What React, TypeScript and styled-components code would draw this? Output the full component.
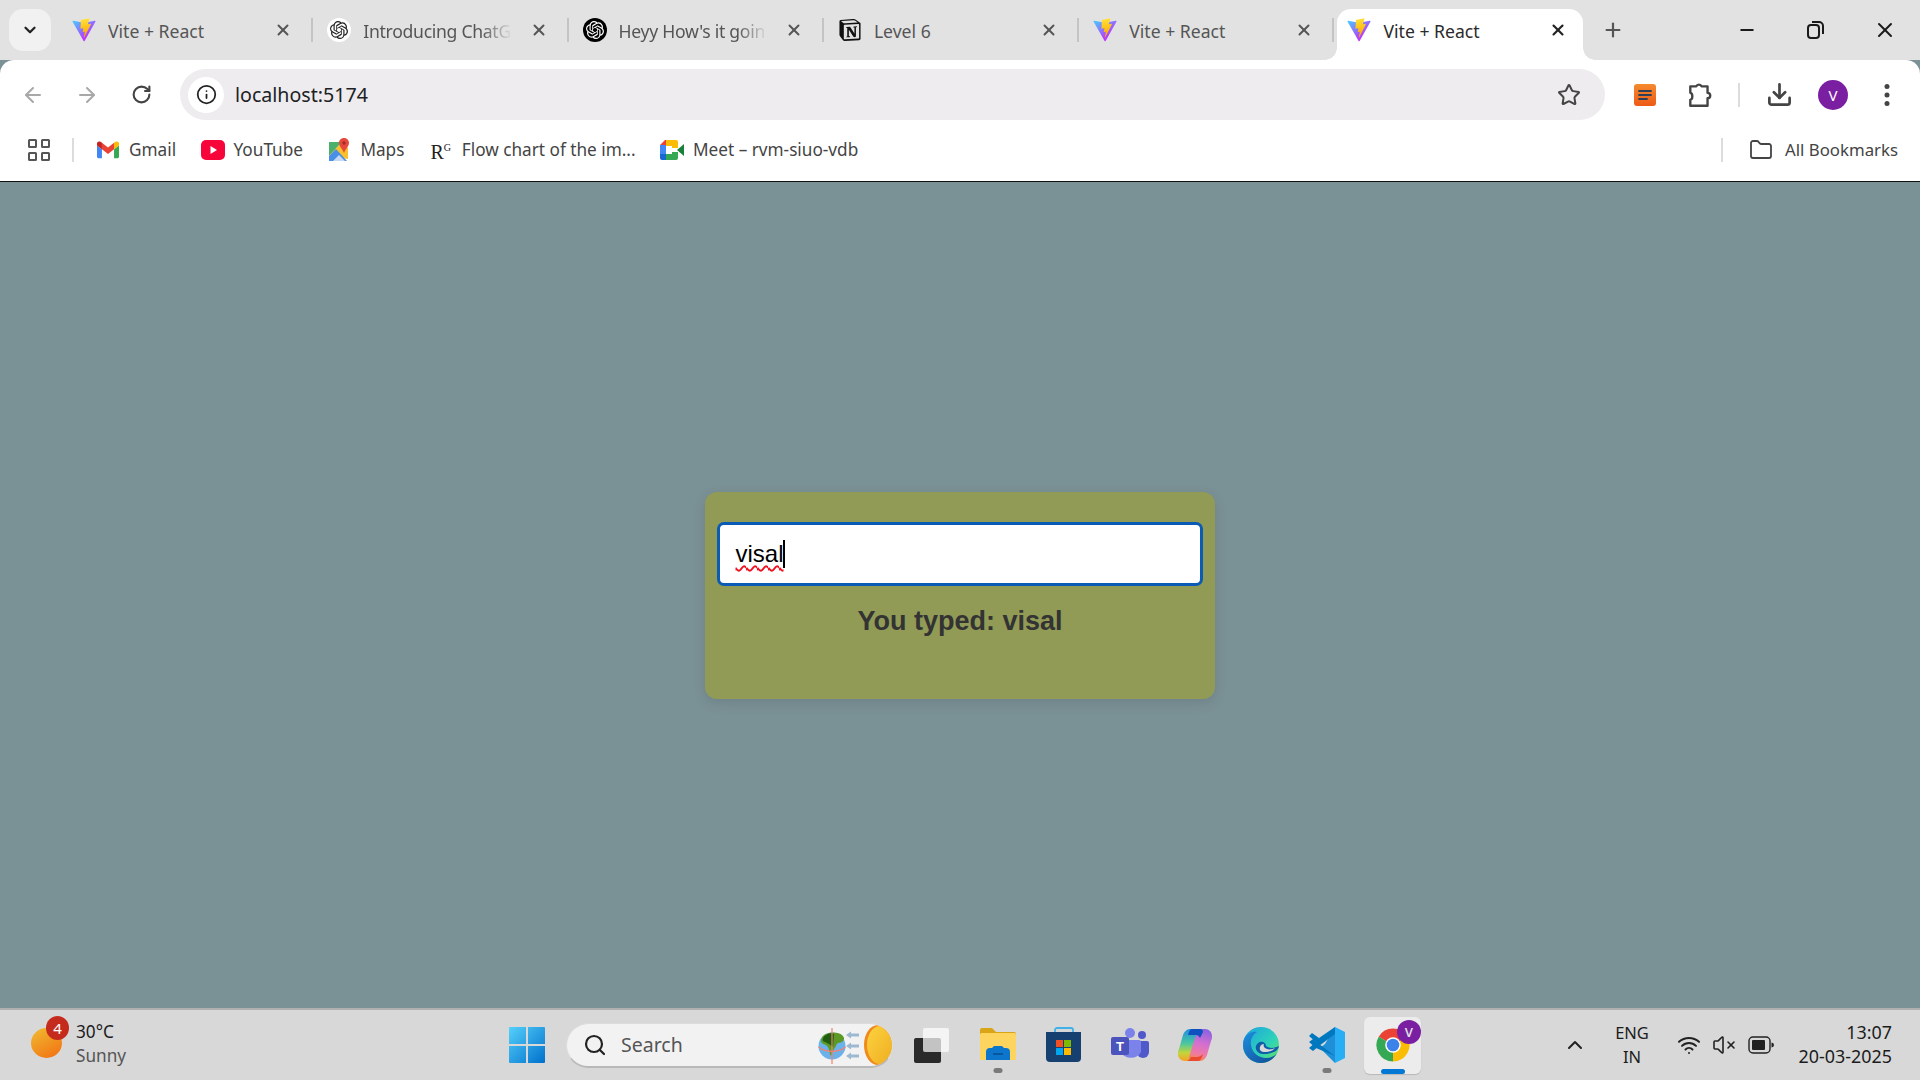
import React, { useId } from "react";
import styled, { createGlobalStyle } from "styled-components";
import { ArrowLeft, ArrowRight, RotateCw, Info, Star, Download, X, Plus, Minus, ChevronDown, ChevronUp, Folder, Search, Wifi, VolumeX } from "lucide-react";
import { SiOpenai, SiNotion } from "react-icons/si";

const Global = createGlobalStyle`
  html, body { margin: 0; padding: 0; height: 100%; overflow: hidden; }
  #root { height: 100vh; }
  * { box-sizing: border-box; }
`;

const UI = `"Noto Sans", "Open Sans", sans-serif`;

const Screen = styled.div`
  display: flex; flex-direction: column; height: 100vh; width: 1920px;
  font-family: ${UI}; background: #7a9196;
`;
const TabStrip = styled.div`
  display: flex; height: 60px; flex: none; background: #e2e2e2; padding-left: 9px; align-items: flex-end;
`;
const TabMenu = styled.div`
  width: 42px; height: 42px; border-radius: 14px; background: #f1f1f1; display: flex; align-items: center; justify-content: center;
  align-self: flex-start; margin-top: 9px; margin-right: 7px; color: #222;
`;
const Tab = styled.div<{ $active?: boolean }>`
  position: relative; width: ${p => (p.$active ? 246 : 254.3)}px; height: 51px; flex: none; display: flex; align-items: center;
  padding: 0 ${p => (p.$active ? 16 : 20)}px 9px ${p => (p.$active ? 10 : 14)}px;
  margin-left: ${p => (p.$active ? 3 : 0)}px; margin-right: ${p => (p.$active ? 5 : 0)}px;
  color: ${p => (p.$active ? "#2b2b2b" : "#555")};
  background: ${p => (p.$active ? "#fff" : "transparent")};
  border-radius: 14px 14px 0 0;
  ${p => p.$active && `
    &::before, &::after { content: ""; position: absolute; bottom: 0; width: 12px; height: 12px; }
    &::before { left: -12px; background: radial-gradient(circle at 0 0, transparent 11.5px, #fff 12px); }
    &::after { right: -12px; background: radial-gradient(circle at 100% 0, transparent 11.5px, #fff 12px); }
  `}
`;
const TabIcon = styled.div`
  width: 24px; height: 24px; flex: none; display: flex; align-items: center; justify-content: center;
`;
const LogoDisc = styled.div<{ $dark?: boolean }>`
  width: 24px; height: 24px; border-radius: 50%; display: flex; align-items: center; justify-content: center;
  background: ${p => (p.$dark ? "#000" : "#fff")}; color: ${p => (p.$dark ? "#fff" : "#222")};
`;
const TabTitle = styled.div<{ $fade?: boolean }>`
  margin-left: 12px; margin-top: 2px; width: 152px; font-size: 17.6px; white-space: nowrap; overflow: hidden;
  ${p => p.$fade && `letter-spacing: -0.3px; mask-image: linear-gradient(to right, #000 78%, transparent 98%);`}
`;
const TabClose = styled.div`
  margin-left: auto; display: flex; align-items: center;
`;
const TabSep = styled.div`
  width: 2px; height: 24px; background: #c4c4c4; align-self: flex-start; margin-top: 18px; margin-left: -1px; margin-right: 0;
`;
const NewTab = styled.div`
  width: 50px; height: 60px; align-self: flex-start; display: flex; align-items: center; justify-content: center; color: #555;
`;
const WindowControls = styled.div`
  margin-left: auto; display: flex; align-self: flex-start; height: 60px; align-items: center;
`;
const WindowButton = styled.div`
  width: 69.33px; display: flex; align-items: center; justify-content: center; color: #1a1a1a;
`;
const Toolbar = styled.div`
  height: 69px; flex: none; background: #fff; border-radius: 14px 14px 0 0; display: flex; align-items: center; padding-left: 7px; gap: 2px;
`;
const NavButton = styled.div<{ $dim?: boolean }>`
  width: 52px; height: 40px; display: flex; align-items: center; justify-content: center; color: ${p => (p.$dim ? "#a8a8a8" : "#444")};
`;
const Address = styled.div`
  flex: 1; height: 51px; margin-left: 11px; background: #eeecee; border-radius: 26px; display: flex; align-items: center; padding: 0 24px 0 8px;
`;
const InfoChip = styled.div`
  width: 36px; height: 36px; border-radius: 50%; background: #fff; display: flex; align-items: center; justify-content: center; color: #222;
`;
const Url = styled.div`
  margin-left: 11px; font-size: 19.6px; color: #202124;
`;
const StarWrap = styled.div`
  margin-left: auto; display: flex; color: #444;
`;
const ToolCluster = styled.div`
  display: flex; align-items: center; width: 313px; flex: none; padding-right: 15px; color: #444;
`;
const ToolSlot = styled.div<{ $w: number }>`
  width: ${p => p.$w}px; display: flex; align-items: center; justify-content: center;
`;
const VSep = styled.div<{ $h?: number; $color?: string }>`
  width: 2px; height: ${p => p.$h ?? 24}px; background: ${p => p.$color ?? "#dcdcdc"}; flex: none;
`;
const Avatar = styled.div`
  width: 30px; height: 30px; border-radius: 50%; background: #7b1fa2; color: #fff; display: flex; align-items: center; justify-content: center; font-size: 15px;
`;
const BookmarkBar = styled.div`
  height: 53px; flex: none; background: #fff; border-bottom: 1px solid #111; padding: 0 22px 10px 28px; display: flex; align-items: center;
`;
const AppsGrid = styled.div`
  width: 22px; height: 22px; display: grid; grid-template-columns: 1fr 1fr; gap: 4px; margin-right: 22px;
`;
const AppsCell = styled.div`
  border: 2px solid #555; border-radius: 1.5px;
`;
const Bookmark = styled.div`
  display: flex; align-items: center; gap: 9px; margin-left: 24.4px; font-size: 17.2px; color: #444; white-space: nowrap;
`;
const FirstBookmark = styled(Bookmark)`
  margin-left: 22px;
`;
const BookmarkLabel = styled.span`
  margin-top: -2px;
`;
const BookmarkIcon = styled.div`
  width: 24px; height: 24px; display: flex; align-items: center; justify-content: center; flex: none;
`;
const RsLogo = styled.div`
  font-family: "Liberation Serif", serif; font-size: 20px; color: #222; line-height: 1; margin-top: 3px;
  sup { font-size: 10px; vertical-align: 8px; line-height: 0; }
`;
const BookmarkEnd = styled.div`
  margin-left: auto; display: flex; align-items: center;
`;
const AllBookmarks = styled(Bookmark)`
  margin-left: 26px; gap: 12px; font-size: 16.8px;
`;
const Page = styled.main`
  flex: 1; display: flex; align-items: center; justify-content: center; background: #7a9196;
`;
const Card = styled.div`
  width: 510px; height: 207px; margin-top: 1px; background: #919b56; border-radius: 12px; padding: 30px 12px 0 12px;
  box-shadow: 0 4px 14px rgba(0, 0, 0, 0.1); display: flex; flex-direction: column; font-family: "Liberation Sans", Arial, sans-serif;
`;
const Field = styled.div`
  height: 64px; background: #fff; border: 3px solid #0a5bb5; border-radius: 7px; display: flex; align-items: center; padding-left: 15.5px; font-size: 24px; color: #000;
`;
const Misspelt = styled.span`
  text-decoration: underline wavy #f01020 1.6px; text-underline-offset: 3px;
`;
const Caret = styled.span`
  width: 2px; height: 28px; background: #000; margin-left: -1px;
`;
const Echo = styled.div`
  margin-top: 20px; text-align: center; font-size: 27px; font-weight: 700; color: #333;
`;
const Taskbar = styled.footer`
  height: 72px; flex: none; background: #d8d8d8; border-top: 2px solid #b0b0b0; display: flex; align-items: center;
`;
const Weather = styled.div`
  width: 500px; flex: none; display: flex; align-items: center; padding-left: 31px;
`;
const Sun = styled.div`
  position: relative; width: 31px; height: 30px; border-radius: 50%; background: linear-gradient(150deg, #f0bd32, #f26d10); margin-top: -4px;
`;
const SunBadge = styled.div`
  position: absolute; left: 15px; top: -12px; width: 23px; height: 24px; border-radius: 50%; background: #c42b1c; color: #fff; font-size: 15px;
  display: flex; align-items: center; justify-content: center;
`;
const Lines = styled.div<{ $align?: string }>`
  display: flex; flex-direction: column; font-size: 16.5px; line-height: 24px; color: #1c1c1c; text-align: ${p => p.$align ?? "left"};
`;
const WeatherText = styled(Lines)`
  margin-left: 14px; margin-top: -2px; font-size: 17.2px;
`;
const Muted = styled.span`
  color: #555;
`;
const TaskSlot = styled.div<{ $w?: number }>`
  position: relative; flex: none; width: ${p => p.$w ?? 65.85}px; height: 57px; display: flex; align-items: center; justify-content: center;
`;
const ActiveTile = styled.div`
  width: 57px; height: 57px; border-radius: 6px; background: #ececec; box-shadow: 0 1px 1px rgba(0,0,0,.15); display: flex; align-items: center; justify-content: center;
`;
const RunDot = styled.div`
  position: absolute; bottom: 1px; left: 50%; transform: translateX(-50%); width: 9px; height: 5px; border-radius: 3px; background: #7a7a7a;
`;
const ActiveBar = styled.div`
  position: absolute; bottom: 0; left: 50%; transform: translateX(-50%); width: 24px; height: 5px; border-radius: 3px; background: #0078d4;
`;
const ChromeBadge = styled.div`
  position: absolute; top: 3px; right: 5px; width: 24px; height: 24px; border-radius: 50%; background: #7b1fa2; color: #ddd; font-size: 13px; font-weight: 600;
  display: flex; align-items: center; justify-content: center;
`;
const SearchPill = styled.div`
  width: 327px; height: 45px; flex: none; margin: 0 4px 0 12px; border-radius: 23px; background: #f2f2f2; border: 1px solid #dcdcdc; border-bottom: 2px solid #b9b9b9;
  display: flex; align-items: center; padding-left: 16px; overflow: hidden; color: #222;
`;
const SearchText = styled.div`
  margin-left: 14px; font-size: 19.5px; color: #555;
`;
const SearchArt = styled.div`
  margin-left: auto; display: flex;
`;
const Tray = styled.div`
  margin-left: auto; width: 360px; flex: none; display: flex; align-items: center; padding-right: 28px; color: #222;
`;
const TraySlot = styled.div<{ $w: number }>`
  width: ${p => p.$w}px; flex: none; display: flex; align-items: center; justify-content: center;
`;
const Clock = styled(Lines)`
  margin-left: auto; margin-top: -2px; font-size: 17.9px;
`;

const Vite = ({ size = 26 }: { size?: number }) => {
  const id = useId();
  return (
    <svg width={size} height={size} viewBox="0 0 410 404">
      <defs>
        <linearGradient id={id + "a"} x1="6" y1="33" x2="235" y2="344" gradientUnits="userSpaceOnUse">
          <stop stopColor="#41D1FF" /><stop offset="1" stopColor="#BD34FE" />
        </linearGradient>
        <linearGradient id={id + "b"} x1="194" y1="8" x2="236" y2="293" gradientUnits="userSpaceOnUse">
          <stop stopColor="#FFEA83" /><stop offset=".08" stopColor="#FFDD35" /><stop offset="1" stopColor="#FFA800" />
        </linearGradient>
      </defs>
      <path fill={`url(#${id}a)`} d="M399.641 59.5246L215.643 388.545C211.844 395.338 202.084 395.378 198.228 388.618L10.5817 59.5563C6.38087 52.1896 12.6802 43.2665 21.0281 44.7586L205.223 77.6824C206.398 77.8924 207.601 77.8904 208.776 77.6763L389.119 44.8058C397.439 43.2894 403.768 52.1434 399.641 59.5246Z" />
      <path fill={`url(#${id}b)`} d="M292.965 1.5744L156.801 28.2552C154.563 28.6937 152.906 30.5903 152.771 32.8664L144.395 174.33C144.198 177.662 147.258 180.248 150.51 179.498L188.42 170.749C191.967 169.931 195.172 173.055 194.443 176.622L183.18 231.775C182.422 235.487 185.907 238.661 189.532 237.56L212.947 230.446C216.577 229.344 220.065 232.527 219.297 236.242L201.398 322.875C200.278 328.294 207.486 331.249 210.492 326.603L212.5 323.5L323.454 102.072C325.312 98.3645 322.108 94.137 318.036 94.9228L279.014 102.454C275.347 103.161 272.227 99.746 273.262 96.1583L298.731 7.86689C299.767 4.27314 296.636 0.855181 292.965 1.5744Z" />
    </svg>
  );
};

const Gmail = () => (
  <svg width="22" height="22" viewBox="0 0 24 24">
    <path fill="#4285f4" d="M1.6 21h3.8V11.3L0 7.2v12.2C0 20.3.7 21 1.6 21z" />
    <path fill="#34a853" d="M18.6 21h3.8c.9 0 1.6-.7 1.6-1.6V7.2l-5.4 4.1z" />
    <path fill="#fbbc04" d="M18.6 4.2v7.1L24 7.2V5c0-2-2.3-3.1-3.9-1.9z" />
    <path fill="#ea4335" d="M5.4 11.3V4.2L12 9.2l6.6-5v7.1L12 16.3z" />
    <path fill="#c5221f" d="M0 5v2.2l5.4 4.1V4.2L3.9 3.1C2.3 1.9 0 3 0 5z" />
  </svg>
);
const YouTube = () => (
  <svg width="24" height="20" viewBox="0 0 24 20">
    <rect width="24" height="20" rx="5" fill="#f6043a" />
    <path d="M9.5 6l6.5 4-6.5 4z" fill="#fff" />
  </svg>
);
const Maps = () => (
  <svg width="24" height="26" viewBox="0 0 24 26">
    <path d="M2 5h13L2 19z" fill="#4caf6a" />
    <path d="M2 19L15 5l6 6v11z" fill="#fbc02d" />
    <path d="M2 24V19l7-7 11 12z" fill="#4a8fe7" />
    <path d="M6 24l6-6 6 6z" fill="#c7d8f2" />
    <path d="M17 1c3 0 5 2.2 5 5 0 3.500-4 6.500-5 10-1-3.500-5-6.500-5-10 0-2.800 2-5 5-5z" fill="#e5483c" />
    <circle cx="17" cy="6" r="1.700" fill="#a32b22" />
  </svg>
);
const Meet = () => (
  <svg width="24" height="22" viewBox="0 0 24 22">
    <path d="M5 1h11v6H6v5H0V6z" fill="#ea4335" />
    <path d="M6 1h10a2 2 0 0 1 2 2v6h-6V7H6z" fill="#fbbc04" />
    <path d="M0 6h6v10H0z" fill="#4285f4" />
    <path d="M0 15h6v6H2a2 2 0 0 1-2-2z" fill="#1967d2" />
    <path d="M6 15h6v-2h6v6a2 2 0 0 1-2 2H6z" fill="#34a853" />
    <path d="M17 11l7-6v12z" fill="#188038" />
  </svg>
);
const PuzzlePiece = () => (
  <svg width="26" height="28" viewBox="0 0 24 26" fill="none" stroke="#444" strokeWidth="2.200" strokeLinejoin="round">
    <path d="M3 5h5.500a2.700 2.700 0 0 1 5 0H19v6a2.300 2.300 0 0 1 0 5v7H3v-5.500c2.500-.3 2.500-6.200 0-6.500z" />
  </svg>
);
const Docs = () => (
  <svg width="22" height="22" viewBox="0 0 22 22">
    <defs><linearGradient id="dg" x1="0" y1="0" x2="0" y2="1"><stop stopColor="#f58a2e" /><stop offset="1" stopColor="#ee5a16" /></linearGradient></defs>
    <rect width="22" height="22" rx="3" fill="url(#dg)" />
    <path d="M5 7h12M5 11h12M5 15h8" stroke="#2f3f55" strokeWidth="1.800" strokeLinecap="round" />
  </svg>
);
const RestoreIcon = () => (
  <svg width="18" height="20" viewBox="0 0 18 20" fill="none" stroke="#1a1a1a" strokeWidth="2">
    <rect x="1" y="5" width="11" height="13" rx="3" />
    <path d="M5 2h7a4 4 0 0 1 4 4v8" />
  </svg>
);
const WinLogo = () => (
  <svg width="36" height="36" viewBox="0 0 36 36">
    <defs><linearGradient id="wg" x1="0" y1="0" x2="1" y2="1"><stop stopColor="#55d0fb" /><stop offset="1" stopColor="#0070cc" /></linearGradient></defs>
    <path d="M0 1a1 1 0 0 1 1-1h16v17H0zM19 0h16a1 1 0 0 1 1 1v16H19zM0 19h17v17H1a1 1 0 0 1-1-1zM19 19h17v16a1 1 0 0 1-1 1H19z" fill="url(#wg)" />
  </svg>
);
const SearchIllustration = () => (
  <svg width="75" height="44" viewBox="0 0 75 44">
    <defs><linearGradient id="sn" x1="0" y1="0" x2="1" y2="1"><stop stopColor="#fdd23f" /><stop offset="1" stopColor="#eeae22" /></linearGradient></defs>
    <circle cx="15" cy="23" r="13.500" fill="#6bb2ea" />
    <path d="M6 13c4-4 15-5 20 0 3 4-1 7-5 7-2 1-2 4-4 6-2 3-2 6-3 7-2-3-1-7-4-10-2-2-6-2-6-5 0-2 1-4 2-5z" fill="#5c9a25" />
    <path d="M9 12c3-2 6-2 8-1l-1 13-4-3-6-3c-1-2 1-5 3-6z" fill="#1f5d10" />
    <path d="M1.500 24c8 6 19 6 27 0" stroke="#f4806f" strokeWidth="1.400" fill="none" />
    <path d="M15 5v36" stroke="#f4806f" strokeWidth="1.200" />
    <path d="M33 12h9M33 23h9M33 33h9" stroke="#9db9d2" strokeWidth="3" />
    <path d="M34 8.500l-5 3.500 5 3.500zM34 19.500l-5 3.500 5 3.500zM34 29.500l-5 3.500 5 3.500z" fill="#9db9d2" />
    <ellipse cx="61" cy="22" rx="14" ry="20" fill="#ef8a1c" />
    <ellipse cx="63" cy="22" rx="13" ry="19" fill="url(#sn)" />
  </svg>
);
const TaskView = () => (
  <svg width="36" height="36" viewBox="0 0 36 36">
    <rect x="1" y="11" width="27" height="25" rx="2" fill="#2a2a2a" />
    <rect x="10" y="1" width="26" height="24" rx="2" fill="#fff" fillOpacity=".72" />
  </svg>
);
const Explorer = () => (
  <svg width="36" height="34" viewBox="0 0 36 34">
    <path d="M0 2a2 2 0 0 1 2-2h10l4 4h18a2 2 0 0 1 2 2v4H0z" fill="#d9a416" />
    <rect y="5" width="36" height="27" rx="1.500" fill="#fdd45e" />
    <path d="M6 24a4 4 0 0 1 4-4h2l2-2h8l2 2h2a4 4 0 0 1 4 4v8H6z" fill="#0b76cc" />
    <path d="M13 26h10" stroke="#074f91" strokeWidth="1.500" />
  </svg>
);
const Store = () => (
  <svg width="36" height="36" viewBox="0 0 36 36">
    <path d="M9 6V3a2 2 0 0 1 2-2h14a2 2 0 0 1 2 2v3" stroke="#3fb1e8" strokeWidth="1.800" fill="none" />
    <path d="M0 5h35v26a4 4 0 0 1-4 4H4a4 4 0 0 1-4-4z" fill="#16406f" />
    <rect x="10" y="13" width="7" height="7" fill="#f25022" /><rect x="18" y="13" width="7" height="7" fill="#7fba00" />
    <rect x="10" y="21" width="7" height="7" fill="#00a4ef" /><rect x="18" y="21" width="7" height="7" fill="#ffb900" />
  </svg>
);
const Teams = () => (
  <svg width="38" height="34" viewBox="0 0 38 34">
    <circle cx="31" cy="7" r="4" fill="#5059c9" />
    <path d="M26 13h10a2 2 0 0 1 2 2v9a6 6 0 0 1-12 0z" fill="#5059c9" />
    <circle cx="19" cy="5" r="5" fill="#7b83eb" />
    <path d="M10 12h18a2 2 0 0 1 2 2v10a11 10 0 0 1-20 0z" fill="#7b83eb" />
    <rect y="9" width="18" height="18" rx="2" fill="#4b53bc" />
    <text x="9" y="23" textAnchor="middle" fontSize="13" fontWeight="700" fill="#fff" fontFamily="Liberation Sans, sans-serif">T</text>
  </svg>
);
const Copilot = () => (
  <svg width="34" height="32" viewBox="0 0 34 32">
    <defs>
      <linearGradient id="cpa" x1="0.4" y1="0" x2="0.4" y2="1"><stop stopColor="#1d8fe0" /><stop offset=".45" stopColor="#4cc6a0" /><stop offset=".75" stopColor="#c4d63a" /><stop offset="1" stopColor="#f6a126" /></linearGradient>
      <linearGradient id="cpb" x1="0.6" y1="0" x2="0.4" y2="1"><stop stopColor="#8a63e0" /><stop offset=".45" stopColor="#d56fd0" /><stop offset=".8" stopColor="#f07aa0" /><stop offset="1" stopColor="#f28a4a" /></linearGradient>
    </defs>
    <path d="M12 0h9c2 0 3 2 2 4l-8 25c-1 2-2 3-4 3H7c-4 0-7-3-7-7 0-2 0-3 1-5L5 6c1-3 4-6 7-6z" fill="url(#cpa)" />
    <path d="M22 32h-9c-2 0-3-2-2-4l8-25c1-2 2-3 4-3h4c4 0 7 3 7 7 0 2 0 3-1 5l-4 14c-1 3-4 6-7 6z" fill="url(#cpb)" />
    <path d="M14 0h8c2 0 3 1 3 3l-3 6c-1-2-2-3-4-3h-8c1-3 2-6 4-6z" fill="#0f4fc0" />
    <path d="M9 32h11c2 0 3-2 4-4l1-3c-2 2-4 3-6 3h-6c-1 2-2 3-4 4z" fill="#ea4a30" />
  </svg>
);
const Edge = () => (
  <svg width="36" height="36" viewBox="0 0 36 36">
    <defs>
      <linearGradient id="eg" x1="0" y1="0" x2="1" y2="1"><stop stopColor="#1ba1e2" /><stop offset=".6" stopColor="#2ed3b7" /><stop offset="1" stopColor="#6ee35a" /></linearGradient>
      <linearGradient id="eb" x1="0" y1="0" x2="1" y2="1"><stop stopColor="#1d8fe0" /><stop offset="1" stopColor="#114a94" /></linearGradient>
    </defs>
    <circle cx="18" cy="18" r="18" fill="url(#eg)" />
    <path d="M0 18C0 8 8 4 14 5c-5 3-7 8-6 13 1 8 8 13 15 13 5 0 9-2 11-5-3 6-9 10-16 10C8 36 0 28 0 18z" fill="url(#eb)" />
    <path d="M20 27c-5 0-8-4-7-8 1-3 4-5 7-4 2 1 3 2 3 4 4 3 9 2 13 0-1 4-4 6-8 7-3 1-5 1-8 1z" fill="#0f5da8" />
    <path d="M21 25c-3 0-5-2-4-5 .5-2 2-3 4-3-1 2 0 4 3 5 3 1 6 0 8-1-2 3-7 4-11 4z" fill="#d8d8d8" />
  </svg>
);
const VSCode = () => (
  <svg width="36" height="36" viewBox="0 0 36 36">
    <path d="M26 0v36L11 21l5-4z" fill="#1f8fd8" />
    <path d="M26 7L10 19l-6 5-4-3 7-6-7-6 3-3 7 5L26 0z" fill="#0078c0" />
    <path d="M26 29L10 17l-6-5-4 3 7 6" fill="#0078c0" />
    <path d="M26 0l10 5v26l-10 5z" fill="#27aef5" />
  </svg>
);
const Chrome = () => (
  <svg width="36" height="36" viewBox="0 0 24 24">
    <path d="M12 12L2.470 6.500A11 11 0 0 1 21.530 6.500z" fill="#ea4335" />
    <path d="M12 12L2.470 6.500A11 11 0 0 0 12 23z" fill="#34a853" />
    <path d="M12 12L21.530 6.500A11 11 0 0 1 12 23z" fill="#fbbc04" />
    <circle cx="12" cy="12" r="5.200" fill="#fff" />
    <circle cx="12" cy="12" r="4.200" fill="#3b82ea" />
  </svg>
);
const Battery = () => (
  <svg width="26" height="18" viewBox="0 0 26 18" fill="none">
    <rect x="1" y="1" width="21" height="16" rx="4" stroke="#222" strokeWidth="1.400" />
    <rect x="4" y="4" width="13" height="10" rx="1" fill="#222" />
    <path d="M23.500 6.500a2.500 2.500 0 0 1 0 5z" fill="#222" />
  </svg>
);

const tabs: { id: string; title: string; icon: React.ReactNode; fade?: boolean }[] = [
  { id: "v1", title: "Vite + React", icon: <Vite /> },
  { id: "gpt", title: "Introducing ChatG", fade: true, icon: <LogoDisc><SiOpenai size={18} /></LogoDisc> },
  { id: "hey", title: "Heyy How's it goin", fade: true, icon: <LogoDisc $dark><SiOpenai size={18} /></LogoDisc> },
  { id: "lv", title: "Level 6", icon: <SiNotion size={22} color="#111" /> },
  { id: "v2", title: "Vite + React", icon: <Vite /> },
];

const dock: { key: string; icon: React.ReactNode; run?: boolean }[] = [
  { key: "explorer", icon: <Explorer />, run: true },
  { key: "store", icon: <Store /> },
  { key: "teams", icon: <Teams /> },
  { key: "copilot", icon: <Copilot /> },
  { key: "edge", icon: <Edge /> },
  { key: "vscode", icon: <VSCode />, run: true },
];

export default function App() {
  return (
    <Screen>
      <Global />
      <TabStrip>
        <TabMenu><ChevronDown size={18} strokeWidth={3} /></TabMenu>
        {tabs.map(t => (
          <React.Fragment key={t.id}>
            <Tab>
              <TabIcon>{t.icon}</TabIcon>
              <TabTitle $fade={t.fade}>{t.title}</TabTitle>
              <TabClose><X size={18} strokeWidth={2.6} color="#555" /></TabClose>
            </Tab>
            <TabSep />
          </React.Fragment>
        ))}
        <Tab $active>
          <TabIcon><Vite /></TabIcon>
          <TabTitle>Vite + React</TabTitle>
          <TabClose><X size={18} strokeWidth={2.8} color="#222" /></TabClose>
        </Tab>
        <NewTab><Plus size={22} strokeWidth={2.4} /></NewTab>
        <WindowControls>
          <WindowButton><Minus size={20} strokeWidth={2.2} /></WindowButton>
          <WindowButton><RestoreIcon /></WindowButton>
          <WindowButton><X size={24} strokeWidth={2} /></WindowButton>
        </WindowControls>
      </TabStrip>
      <Toolbar>
        <NavButton $dim><ArrowLeft size={24} strokeWidth={2} /></NavButton>
        <NavButton $dim><ArrowRight size={24} strokeWidth={2} /></NavButton>
        <NavButton><RotateCw size={21} strokeWidth={2.4} /></NavButton>
        <Address>
          <InfoChip><Info size={21} strokeWidth={2} /></InfoChip>
          <Url>localhost:5174</Url>
          <StarWrap><Star size={24} strokeWidth={2} /></StarWrap>
        </Address>
        <ToolCluster>
          <ToolSlot $w={76}><Docs /></ToolSlot>
          <ToolSlot $w={34}><PuzzlePiece /></ToolSlot>
          <ToolSlot $w={44}><VSep $h={24} /></ToolSlot>
          <ToolSlot $w={36}><Download size={27} strokeWidth={2.4} /></ToolSlot>
          <ToolSlot $w={72}><Avatar>V</Avatar></ToolSlot>
          <ToolSlot $w={36}>
            <svg width="6" height="24" viewBox="0 0 6 24" fill="#444"><circle cx="3" cy="3.500" r="2.500" /><circle cx="3" cy="12" r="2.500" /><circle cx="3" cy="20.500" r="2.500" /></svg>
          </ToolSlot>
        </ToolCluster>
      </Toolbar>
      <BookmarkBar>
        <AppsGrid><AppsCell /><AppsCell /><AppsCell /><AppsCell /></AppsGrid>
        <VSep $h={24} />
        <FirstBookmark><BookmarkIcon><Gmail /></BookmarkIcon><BookmarkLabel>Gmail</BookmarkLabel></FirstBookmark>
        <Bookmark><BookmarkIcon><YouTube /></BookmarkIcon><BookmarkLabel>YouTube</BookmarkLabel></Bookmark>
        <Bookmark><BookmarkIcon><Maps /></BookmarkIcon><BookmarkLabel>Maps</BookmarkLabel></Bookmark>
        <Bookmark><BookmarkIcon><RsLogo>R<sup>G</sup></RsLogo></BookmarkIcon><BookmarkLabel>Flow chart of the im...</BookmarkLabel></Bookmark>
        <Bookmark><BookmarkIcon><Meet /></BookmarkIcon><BookmarkLabel>Meet – rvm-siuo-vdb</BookmarkLabel></Bookmark>
        <BookmarkEnd>
          <VSep $h={24} />
          <AllBookmarks><Folder size={24} strokeWidth={1.8} /><BookmarkLabel>All Bookmarks</BookmarkLabel></AllBookmarks>
        </BookmarkEnd>
      </BookmarkBar>
      <Page>
        <Card>
          <Field><Misspelt>visal</Misspelt><Caret /></Field>
          <Echo>You typed: visal</Echo>
        </Card>
      </Page>
      <Taskbar>
        <Weather>
          <Sun><SunBadge>4</SunBadge></Sun>
          <WeatherText><span>30°C</span><Muted>Sunny</Muted></WeatherText>
        </Weather>
        <TaskSlot $w={54}><WinLogo /></TaskSlot>
        <SearchPill>
          <Search size={24} strokeWidth={2.2} />
          <SearchText>Search</SearchText>
          <SearchArt><SearchIllustration /></SearchArt>
        </SearchPill>
        <TaskSlot $w={68}><TaskView /></TaskSlot>
        {dock.map(d => (
          <TaskSlot key={d.key}>{d.icon}{d.run && <RunDot />}</TaskSlot>
        ))}
        <TaskSlot>
          <ActiveTile><Chrome /></ActiveTile>
          <ChromeBadge>V</ChromeBadge>
          <ActiveBar />
        </TaskSlot>
        <Tray>
          <TraySlot $w={30}><ChevronUp size={24} strokeWidth={2} /></TraySlot>
          <TraySlot $w={84}><Lines $align="center"><span>ENG</span><span>IN</span></Lines></TraySlot>
          <TraySlot $w={30}><Wifi size={24} strokeWidth={2} /></TraySlot>
          <TraySlot $w={40}><VolumeX size={24} strokeWidth={1.6} /></TraySlot>
          <TraySlot $w={34}><Battery /></TraySlot>
          <Clock $align="right"><span>13:07</span><span>20-03-2025</span></Clock>
        </Tray>
      </Taskbar>
    </Screen>
  );
}
